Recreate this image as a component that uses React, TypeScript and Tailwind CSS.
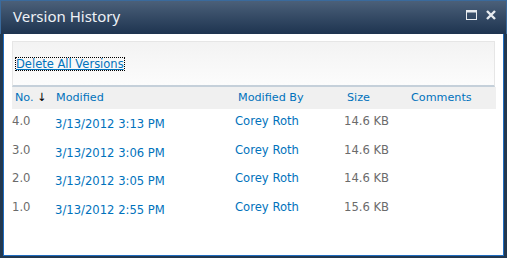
import React from "react";

const rows = [
  { no: "4.0", date: "3/13/2012 3:13 PM", by: "Corey Roth", size: "14.6 KB" },
  { no: "3.0", date: "3/13/2012 3:06 PM", by: "Corey Roth", size: "14.6 KB" },
  { no: "2.0", date: "3/13/2012 3:05 PM", by: "Corey Roth", size: "14.6 KB" },
  { no: "1.0", date: "3/13/2012 2:55 PM", by: "Corey Roth", size: "15.6 KB" },
];

export default function App() {
  const ff = { fontFamily: '"DejaVu Sans", Verdana, sans-serif' };
  return (
    <div className="w-[507px] h-[258px] flex flex-col bg-[#22384f]" style={ff}>
      {/* title bar */}
      <div className="h-[34px] flex items-start justify-between bg-gradient-to-b from-[#4b6079] to-[#1e3450] border-t border-l border-r border-[#3a6a9c]">
        <div className="pl-[12px] pt-[5px] text-[15px] leading-[20px] text-[#eef2f6]" style={{ fontFamily: '"Noto Sans", "Open Sans", sans-serif' }}>
          Version History
        </div>
        <div className="flex items-center gap-[9px] pt-[9px] pr-[10px]">
          <svg width="11" height="10" viewBox="0 0 11 10">
            <rect x="0.5" y="0.5" width="10" height="9" fill="none" stroke="#e8ecf0" strokeWidth="1" />
            <rect x="0.5" y="0.5" width="10" height="2" fill="#e8ecf0" />
          </svg>
          <svg width="10" height="10" viewBox="0 0 10 10">
            <path d="M1 1 L9 9 M9 1 L1 9" stroke="#e8ecf0" strokeWidth="2.4" />
          </svg>
        </div>
      </div>
      {/* body */}
      <div className="flex-1 mx-[3px] mb-[2px] bg-[#22384f]">
        <div className="h-full bg-white border-r border-b border-l border-[#1f6cc0] px-[8px] pt-[7px]">
          <div className="h-[46px] border border-[#e6e6e6] border-b-2 border-b-[#c5d0da] bg-gradient-to-b from-[#f3f3f3] to-[#fcfcfc] flex items-center pl-[3px] pt-[1px]">
            <span className="text-[11.5px] leading-[12px] text-[#0072bc] underline outline-1 outline-dotted outline-black">
              Delete All Versions
            </span>
          </div>
          <table className="w-[484px] table-fixed border-collapse">
            <colgroup>
              <col className="w-[43px]" />
              <col className="w-[180px]" />
              <col className="w-[109px]" />
              <col className="w-[64px]" />
              <col />
            </colgroup>
            <thead>
              <tr className="h-[22px] bg-[#f0f0f0] text-[11.2px] text-[#0072bc] text-left">
                <th className="font-normal pl-[3px] whitespace-nowrap">
                  No. <span className="text-black">↓</span>
                </th>
                <th className="font-normal pl-[1px]">Modified</th>
                <th className="font-normal pl-[3px]">Modified By</th>
                <th className="font-normal pl-[3px]">Size</th>
                <th className="font-normal pl-[3px]">Comments</th>
              </tr>
            </thead>
            <tbody>
              {rows.map((r) => (
                <tr key={r.no} className="h-[28.7px] align-top text-[11.6px] leading-[14px]">
                  <td className="pt-[5px] text-[#6b6b6b]">{r.no}</td>
                  <td className="pt-[8px] text-[#0072bc]">{r.date}</td>
                  <td className="pt-[5px] text-[#0072bc]">{r.by}</td>
                  <td className="pt-[5px] text-[#6b6b6b]">{r.size}</td>
                  <td></td>
                </tr>
              ))}
            </tbody>
          </table>
        </div>
      </div>
    </div>
  );
}
